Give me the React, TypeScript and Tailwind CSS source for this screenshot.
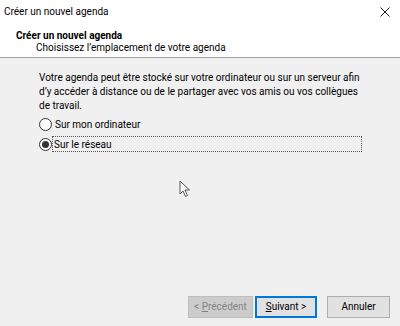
import { useState } from 'react';

const Radio = ({ checked }: { checked: boolean }) => (
  <span className="w-[13px] h-[13px] rounded-full border border-[#333333] bg-white flex items-center justify-center shrink-0">
    {checked && <span className="w-[7px] h-[7px] rounded-full bg-[#333333]" />}
  </span>
);

export default function App() {
  const [choice, setChoice] = useState<'local' | 'network'>('network');

  return (
    <div className="w-[400px] h-[326px] flex flex-col bg-[#f0f0f0] text-[10px] text-black overflow-hidden font-[Roboto,sans-serif]">
      {/* title bar + header */}
      <div className="bg-white border-b border-[#a0a0a0] h-[58px] flex flex-col">
        <div className="h-[24px] flex items-center justify-between pl-[4px] pr-[10px]">
          <span className="leading-none">Créer un nouvel agenda</span>
          <svg width="10" height="10" viewBox="0 0 10 10" className="text-[#1a1a1a]">
            <path d="M0.5 0.5 L9.5 9.5 M9.5 0.5 L0.5 9.5" stroke="currentColor" strokeWidth="1" />
          </svg>
        </div>
        <div className="pl-[16px] pt-[5px] font-bold leading-[13px]">Créer un nouvel agenda</div>
        <div className="pl-[36px] leading-[12px]">Choisissez l’emplacement de votre agenda</div>
      </div>

      {/* body */}
      <div className="flex-1 flex flex-col pl-[39px] pr-[36px] pt-[13px] relative">
        <p className="leading-[14px] whitespace-nowrap">
          Votre agenda peut être stocké sur votre ordinateur ou sur un serveur afin
          <br />
          d’y accéder à distance ou de le partager avec vos amis ou vos collègues
          <br />
          de travail.
        </p>
        <label className="flex items-center gap-[2px] mt-[2px] h-[18px]" onClick={() => setChoice('local')}>
          <Radio checked={choice === 'local'} />
          <span className="px-[1px]">Sur mon ordinateur</span>
        </label>
        <label className="flex items-center mt-[3px] h-[16px] pr-[2px]" onClick={() => setChoice('network')}>
          <Radio checked={choice === 'network'} />
          <span className="flex-1 h-full flex items-center border border-dotted border-[#555555] px-[1px]">Sur le réseau</span>
        </label>

        {/* mouse pointer */}
        <svg className="absolute left-[179px] top-[122px]" width="12" height="18" viewBox="0 0 12 18">
          <path d="M1 1 L1 14 L4 11 L6.5 16.5 L8.5 15.5 L6 10 L10.5 10 Z" fill="white" stroke="#555555" strokeWidth="1" strokeLinejoin="round" />
        </svg>
      </div>

      {/* footer buttons */}
      <div className="h-[30px] flex items-start justify-end pr-[10px]">
        <button className="w-[65px] h-[22px] bg-[#cccccc] border border-[#bfbfbf] text-[#838383] leading-none whitespace-nowrap" disabled>
          &lt; <span className="underline">P</span>récédent
        </button>
        <button className="ml-[2px] w-[62px] h-[22px] bg-[#e1e1e1] border-2 border-[#0078d7] leading-none whitespace-nowrap">
          <span className="underline">S</span>uivant &gt;
        </button>
        <button className="ml-[10px] w-[63px] h-[22px] bg-[#e1e1e1] border border-[#adadad] leading-none whitespace-nowrap">
          Annuler
        </button>
      </div>
    </div>
  );
}
